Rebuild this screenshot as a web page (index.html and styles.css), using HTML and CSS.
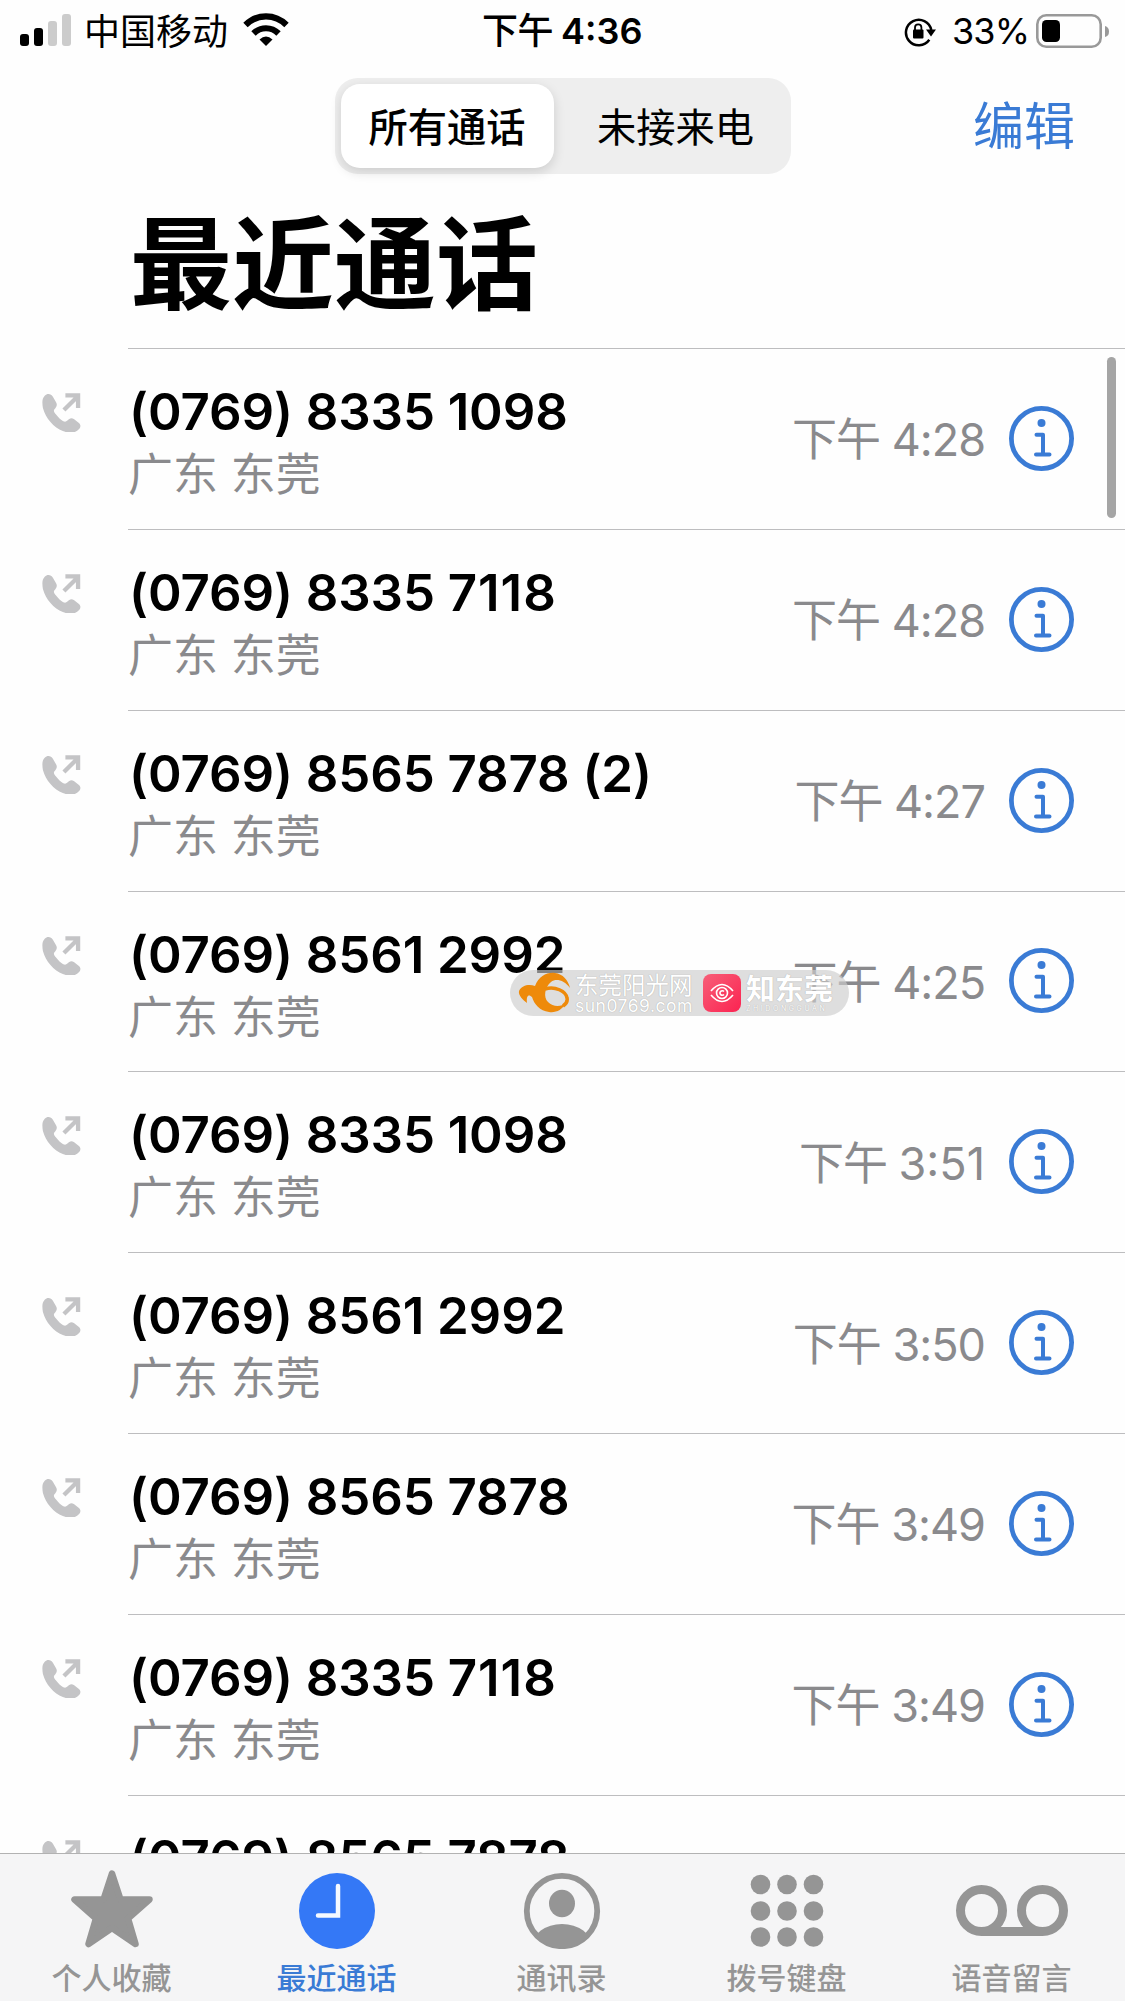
FILE: index.html
```html
<!DOCTYPE html>
<html lang="zh-CN">
<head>
<meta charset="utf-8">
<title>最近通话</title>
<link rel="stylesheet" href="styles.css">
</head>
<body>
<svg class="defs" width="0" height="0" aria-hidden="true">
  <symbol id="outgoing" viewBox="0 0 40 40">
    <path d="M3 3C6 0 10 1 12 4l3.500 6c2 3 0 5.500-2 7.500c-1 2 0 3 2 5.500s5 5.500 7.500 7c2 1 3.500 1 5-.5c2-2.500 4.500-3.500 7.500-1.500l4.500 3.500c3 2 3 5 1 7c-5 5-11 5-18 2C13 37 4 27 1 16C0 10 0 6 3 3Z" transform="scale(.93 .96)"/>
    <path d="M22.500 17.500L36 4M24 2.500H37V15.500" fill="none" stroke="currentColor" stroke-width="4.400"/>
  </symbol>
  <symbol id="info" viewBox="0 0 66 66">
    <circle cx="32.500" cy="32.500" r="30.100" fill="none" stroke="currentColor" stroke-width="4.800"/>
    <circle cx="32.500" cy="17" r="4"/>
    <path d="M27.500 28.800H34V48.500M27 48.500H40.500" fill="none" stroke="currentColor" stroke-width="4" stroke-linecap="round" stroke-linejoin="round"/>
  </symbol>
</svg>
<div class="phone">
  <header class="status">
    <div class="carrier">
      <svg width="52" height="34" viewBox="0 0 52 34"><rect y="20" width="9" height="12" rx="3"/><rect x="14" y="14" width="9" height="18" rx="3"/><g fill="#ccc"><rect x="28" y="7" width="9" height="25" rx="3"/><rect x="42" width="9" height="32" rx="3"/></g></svg>
      <span class="carrier-name">中国移动</span>
      <svg class="wifi" width="46" height="34" viewBox="0 0 46 34"><g fill="none" stroke="#000" stroke-width="6.200"><path d="M2.500 12C14 .5 32 .5 43.500 12"/><path d="M10.500 20.500C17.500 13.500 28.500 13.500 35.500 20.500"/></g><path d="M16.500 26.500Q23 20.500 29.500 26.500L23 33Z"/></svg>
    </div>
    <div class="clock"><span class="clock-cn">下午</span><span>4:36</span></div>
    <div class="power">
      <svg width="32" height="30" viewBox="0 0 32 30"><path d="M25.300 22.800A12.800 12.800 0 1 1 27.300 13" fill="none" stroke="#000" stroke-width="2.500"/><path d="M22 12.500H32L27 19.500Z"/><rect x="9" y="12.500" width="10.500" height="9" rx="1"/><path d="M11 13V10.500a3.200 3.200 0 0 1 6.400 0V13" fill="none" stroke="#000" stroke-width="1.800"/></svg>
      <span class="percent">33%</span>
      <svg width="74" height="34" viewBox="0 0 74 34"><rect x="1.300" y="1.300" width="63.400" height="31.400" rx="9" fill="none" stroke="#999" stroke-width="2.600"/><rect x="6" y="6" width="18" height="22" rx="4.500"/><path d="M69 12Q73 13 73 17.500T69 23Z" fill="#999"/></svg>
    </div>
  </header>
  <nav class="toolbar">
    <div class="segments"><span class="segment selected">所有通话</span><span class="segment">未接来电</span></div>
    <span class="edit">编辑</span>
  </nav>
  <h1>最近通话</h1>
  <main class="calls" id="calls"></main>
  <div class="scrollbar"></div>
  <div class="badge">
    <svg class="sun" width="52" height="42" viewBox="0 0 52 42"><path fill="#ee8a0a" d="M17 14C21 4 29 0 37 1C45 2 50 8 52 16C46 8 38 6 33 10C27 15 25 25 30 30C35 35 43 35 48 31C44 38 38 41 31 40C22 39 16 32 14 25C11 22 8 23 9 31C5 28 0 23 1 19C4 13 11 12 17 14Z"/><path d="M27 17C37 14 48 19 49 26C50 30 48 32 45 34" fill="none" stroke="#ee8a0a" stroke-width="3.500"/></svg>
    <div class="site"><span class="site-name">东莞阳光网</span><span class="site-url">sun0769.com</span></div>
    <svg class="eye" width="38" height="38" viewBox="0 0 38 38"><defs><linearGradient id="rose" x1="0" y1="0" x2="1" y2="1"><stop stop-color="#f75f78"/><stop offset="1" stop-color="#fb2351"/></linearGradient></defs><rect width="38" height="38" rx="8" fill="url(#rose)"/><g fill="none" stroke="#fff" stroke-width="1.600"><path d="M8 17Q19 4 30 17M8 21Q19 34 30 21"/><circle cx="19" cy="19" r="5.500"/><path d="M21 17.500a2.300 2.300 0 1 0 0 3"/></g></svg>
    <div class="app"><span class="app-name">知东莞</span><span class="app-latin">ZHIDONGGUAN</span></div>
  </div>
  <footer class="tabs">
    <div class="tab"><svg width="84" height="80" viewBox="0 0 84 80"><path d="M42 4.500L50.500 30.500H79.500L58 49.500L65.500 75L42 59L18.500 75L26 49.500L4.500 30.500H33.500Z" stroke="currentColor" stroke-width="6.500" stroke-linejoin="round"/></svg><span>个人收藏</span></div>
    <div class="tab active"><svg width="84" height="80" viewBox="0 0 84 80"><circle cx="42" cy="42" r="38"/><path d="M43 17V46.500H23" fill="none" stroke="#f5f9ff" stroke-width="4.500" stroke-linecap="round"/></svg><span>最近通话</span></div>
    <div class="tab"><svg width="84" height="80" viewBox="0 0 84 80"><clipPath id="disc"><circle cx="42" cy="42" r="37"/></clipPath><circle cx="42" cy="42" r="35.200" fill="none" stroke="currentColor" stroke-width="5.800"/><ellipse cx="42" cy="34.500" rx="13" ry="13.700"/><ellipse cx="42" cy="77" rx="30" ry="22" clip-path="url(#disc)"/></svg><span>通讯录</span></div>
    <div class="tab"><svg width="84" height="80" viewBox="0 0 84 80"><g id="dots"><circle cx="15.500" cy="15.500" r="9.800"/><circle cx="42" cy="15.500" r="9.800"/><circle cx="68.500" cy="15.500" r="9.800"/></g><use href="#dots" y="26.500"/><use href="#dots" y="52.500"/></svg><span>拨号键盘</span></div>
    <div class="tab"><svg width="114" height="80" viewBox="0 0 114 80"><g fill="none" stroke="currentColor" stroke-width="9"><circle cx="26.500" cy="41.500" r="21"/><circle cx="87.500" cy="41.500" r="21"/><path d="M26.500 62.500H87.500"/></g></svg><span>语音留言</span></div>
  </footer>
</div>
<script src="calls.js"></script>
</body>
</html>
```
FILE: styles.css
```css
* { box-sizing: border-box; }
body { margin: 0; background: #fff; color: #000; font-family: Inter, "Noto Sans CJK SC", sans-serif; }
svg { display: block; flex: none; fill: currentColor; }
.defs { position: absolute; }
.phone { position: relative; width: 1125px; height: 2001px; overflow: hidden; display: flex; flex-direction: column; background: #fefefe; white-space: nowrap; }
.status { height: 78px; flex: none; display: grid; grid-template-columns: 482px 1fr 221px; align-items: start; }
.carrier { display: flex; padding: 14px 0 0 20px; }
.carrier-name { font-size: 36px; line-height: 36px; margin-left: 12px; width: 144px; }
.wifi { margin-left: 15px; margin-top: -1px; }
.clock { display: flex; gap: 8px; padding-top: 14px; font-size: 36px; line-height: 35px; font-weight: 600; }
.clock-cn { font-weight: 500; letter-spacing: -.5px; }
.power { display: flex; padding-top: 14px; }
.power svg:first-child { margin-top: 3px; }
.percent { font-size: 36px; line-height: 35px; width: 84px; padding-left: 16px; letter-spacing: -.9px; margin-right: 16px; }
.toolbar { flex: none; height: 96px; display: flex; justify-content: space-between; align-items: center; padding: 0 50px 0 335px; }
.segments { width: 456px; height: 96px; display: flex; padding: 6px 6px; border-radius: 23px; background: #eee; }
.segment { flex: 1; display: flex; justify-content: center; align-items: center; font-size: 39.300px; border-radius: 19px; padding: 0 0 3px 12px; }
.segment.selected { flex: 0 0 213px; background: #fff; font-weight: 500; padding: 0 1px 3px 0; box-shadow: 0 4px 12px rgba(0,0,0,.14); }
.edit { font-size: 51px; line-height: 60px; color: #3a7bd5; padding-top: 2px; }
h1 { margin: 0; flex: none; height: 174px; padding: 31px 0 0 130px; font-size: 102px; line-height: 120px; font-weight: 700; }
.call { height: 180.850px; padding-left: 42px; display: flex; }
.call-icon { color: #c4c4c6; width: 39px; height: 39px; margin-top: 45px; }
.call-body { flex: 1; margin-left: 47px; border-top: 1px solid #bdbdbf; display: flex; align-items: center; padding-right: 50px; }
.call-text { flex: 1; align-self: flex-start; padding-top: 33px; }
.number { font-size: 51px; line-height: 60px; font-weight: 600; padding-left: 1px; letter-spacing: -.1px; }
.number .ones { letter-spacing: 1px; }
.place { font-size: 45px; line-height: 60px; color: #8a8a8d; padding-top: 3px; }
.time { font-size: 45px; line-height: 60px; color: #8a8a8d; margin: 3px 24px 0 0; letter-spacing: -1px; }
.time .ones { letter-spacing: 0; }
.info { color: #3a7bd5; width: 66px; height: 66px; }
.scrollbar { position: absolute; right: 9px; top: 357px; width: 9px; height: 161px; border-radius: 5px; background: #a5a5a5; }
.badge { position: absolute; left: 510px; top: 970px; width: 339px; height: 46px; border-radius: 23px; background: rgba(205,205,205,.65); display: flex; align-items: center; padding-left: 8px; color: #fff; }
.site, .app { display: flex; flex-direction: column; text-shadow: 0 0 1px #999; }
.site { margin-left: 5px; width: 121px; }
.site-name { font-size: 23.500px; line-height: 25px; }
.site-url { font-size: 17.500px; line-height: 16px; letter-spacing: .5px; }
.eye { margin-left: 7px; }
.app { margin-left: 5px; }
.app-name { font-size: 29px; line-height: 31px; font-weight: 700; }
.app-latin { font-size: 7px; line-height: 7px; letter-spacing: 2.600px; }
.tabs { position: absolute; inset: auto 0 0; height: 148px; display: grid; grid-template-columns: repeat(5, 1fr); border-top: 1px solid #b2b2b2; background: #f5f5f6; }
.tab { display: flex; flex-direction: column; align-items: center; padding: 15px 2px 0 0; color: #959595; font-size: 30px; line-height: 36px; font-weight: 500; gap: 11px; }
.tab.active { color: #3478f6; }
.tab.active span { color: #3a7bd5; }
```
FILE: calls.js
```js
const calls = [
  ['(0769) 8335 1098', '4:28'],
  ['(0769) 8335 7118', '4:28'],
  ['(0769) 8565 7878 (2)', '4:27'],
  ['(0769) 8561 2992', '4:25'],
  ['(0769) 8335 1098', '3:51'],
  ['(0769) 8561 2992', '3:50'],
  ['(0769) 8565 7878', '3:49'],
  ['(0769) 8335 7118', '3:49'],
  ['(0769) 8565 7878', '3:48'],
];
const loosen = text => text.replace(/7118|3:51/, '<span class="ones">$&</span>');
document.getElementById('calls').innerHTML = calls.map(([number, time]) => `
  <div class="call">
    <svg class="call-icon"><use href="#outgoing"/></svg>
    <div class="call-body">
      <div class="call-text"><div class="number">${loosen(number)}</div><div class="place">广东 东莞</div></div>
      <span class="time">下午 ${loosen(time)}</span>
      <svg class="info"><use href="#info"/></svg>
    </div>
  </div>`).join('');
```
